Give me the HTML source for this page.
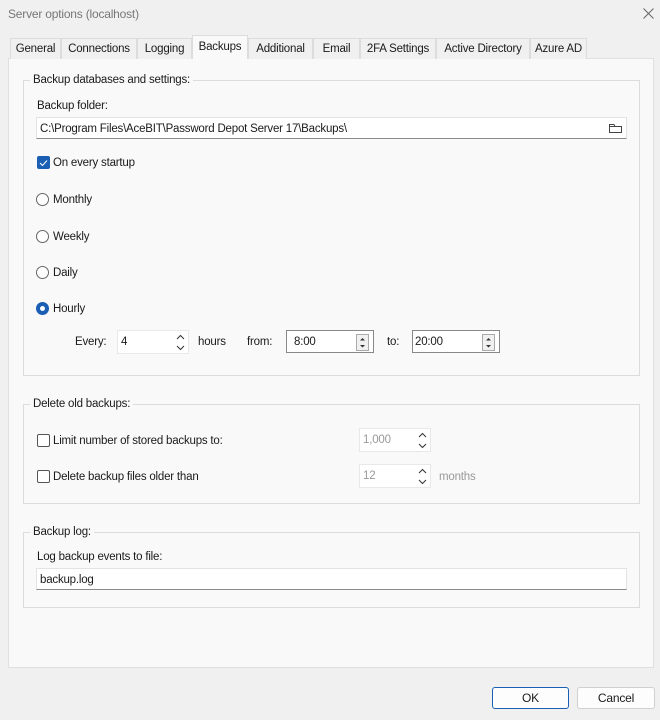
<!DOCTYPE html>
<html><head><meta charset="utf-8"><style>
*{box-sizing:border-box;margin:0;padding:0}
body{width:660px;height:720px;background:#f0f0f0;font-family:"Liberation Sans",sans-serif;font-size:11.5px;color:#1a1a1a;position:relative;overflow:hidden;letter-spacing:-0.2px}
.a{position:absolute;white-space:nowrap}
.t{margin-top:1px}
.tab{position:absolute;top:38px;height:21px;border:1px solid #dcdcdc;border-bottom:none;background:#f0f0f0;text-align:center;line-height:21px}
.page{position:absolute;left:8px;top:58px;width:646px;height:610px;background:#f9f9f9;border:1px solid #e0e0e0}
.grp{position:absolute;left:23px;width:617px;border:1px solid #dcdcdc}
.glab{position:absolute;background:#f9f9f9;padding:0 3px;left:30px}
.inp{position:absolute;background:#fff;border:1px solid #e3e3e3;border-bottom:1px solid #8a8a8a;height:22px;line-height:22px;padding-left:3px}
.cb{position:absolute;width:13px;height:13px;border:1px solid #555;border-radius:2px;background:#fff}
.rb{position:absolute;width:13px;height:13px;border:1px solid #666;border-radius:50%;background:#fff}
.spin{position:absolute;background:#fff;border:1px solid #e8e8e8;height:24px;line-height:23px;padding-left:3px}
.spin2{position:absolute;background:#fff;border:1px solid #888;height:23px;line-height:22px;padding-left:7px}
.arr{position:absolute;right:4px;top:3px;width:13px;height:17px;border:1px solid #aaa;background:#f0f0f0}
.btn{position:absolute;top:687px;height:22px;background:#fdfdfd;border:1px solid #d0d0d0;border-radius:3px;text-align:center;line-height:21px;font-size:12px}
</style></head><body>
<div class="a" style="left:8px;top:7px;color:#777;font-size:12px">Server options (localhost)</div>
<svg class="a" style="left:643px;top:8px" width="11" height="11"><path d="M0.5 0.5L10.5 10.5M10.5 0.5L0.5 10.5" stroke="#666" stroke-width="1"/></svg>
<div class="page"></div>
<div class="tab" style="left:10px;width:51px">General</div>
<div class="tab" style="left:61px;width:76px">Connections</div>
<div class="tab" style="left:137px;width:55px">Logging</div>
<div class="tab" style="left:192px;width:56px;top:35px;height:24px;background:#f9f9f9;line-height:23px;z-index:2">Backups</div>
<div class="tab" style="left:248px;width:65px">Additional</div>
<div class="tab" style="left:313px;width:47px">Email</div>
<div class="tab" style="left:360px;width:76px">2FA Settings</div>
<div class="tab" style="left:436px;width:94px">Active Directory</div>
<div class="tab" style="left:530px;width:57px">Azure AD</div>

<div class="grp" style="top:80px;height:296px"></div>
<div class="glab" style="top:74px">Backup databases and settings:</div>
<div class="a" style="left:37px;top:100px">Backup folder:</div>
<div class="inp" style="left:36px;top:117px;width:591px">C:\Program Files\AceBIT\Password Depot Server 17\Backups\</div>
<svg class="a" style="left:608px;top:122px" width="15" height="12"><path d="M1.5 2.5V10.5H13.5V4.5H7L6 2.5Z M1.5 4.5H7" fill="none" stroke="#444"/></svg>
<div class="cb" style="left:37px;top:156px;background:#1a5fb4;border-color:#1a5fb4"></div>
<svg class="a" style="left:39px;top:159px" width="9" height="8"><path d="M1 4L3.5 6.5L8 1.5" fill="none" stroke="#fff" stroke-width="1"/></svg>
<div class="a" style="left:53px;top:157px">On every startup</div>
<div class="rb" style="left:36px;top:193px"></div><div class="a" style="left:53px;top:194px">Monthly</div>
<div class="rb" style="left:36px;top:230px"></div><div class="a" style="left:53px;top:231px">Weekly</div>
<div class="rb" style="left:36px;top:266px"></div><div class="a" style="left:53px;top:267px">Daily</div>
<div class="rb" style="left:36px;top:302px;border:4px solid #1a5fb4"></div><div class="a" style="left:53px;top:303px">Hourly</div>
<div class="a" style="left:75px;top:336px">Every:</div>
<div class="spin" style="left:117px;top:330px;width:72px">4
<svg class="a" style="right:3px;top:3px" width="9" height="18"><path d="M1 5L4.5 1.5L8 5M1 12L4.5 15.5L8 12" fill="none" stroke="#333"/></svg></div>
<div class="a" style="left:198px;top:336px">hours</div>
<div class="a" style="left:247px;top:336px">from:</div>
<div class="spin2" style="left:286px;top:330px;width:88px">8:00<div class="arr"><svg width="11" height="15"><path d="M3 5.5L5.5 3L8 5.5Z M3 10L5.5 12.5L8 10Z" fill="#333"/></svg></div></div>
<div class="a" style="left:387px;top:336px">to:</div>
<div class="spin2" style="left:412px;top:330px;width:88px;padding-left:2px">20:00<div class="arr"><svg width="11" height="15"><path d="M3 5.5L5.5 3L8 5.5Z M3 10L5.5 12.5L8 10Z" fill="#333"/></svg></div></div>

<div class="grp" style="top:404px;height:100px"></div>
<div class="glab" style="top:398px">Delete old backups:</div>
<div class="cb" style="left:37px;top:434px"></div><div class="a" style="left:53px;top:435px">Limit number of stored backups to:</div>
<div class="spin" style="left:359px;top:428px;width:72px;color:#999">1,000
<svg class="a" style="right:3px;top:3px" width="9" height="18"><path d="M1 5L4.5 1.5L8 5M1 12L4.5 15.5L8 12" fill="none" stroke="#333"/></svg></div>
<div class="cb" style="left:37px;top:470px"></div><div class="a" style="left:53px;top:471px">Delete backup files older than</div>
<div class="spin" style="left:359px;top:464px;width:72px;color:#999">12
<svg class="a" style="right:3px;top:3px" width="9" height="18"><path d="M1 5L4.5 1.5L8 5M1 12L4.5 15.5L8 12" fill="none" stroke="#333"/></svg></div>
<div class="a" style="left:439px;top:471px;color:#999">months</div>

<div class="grp" style="top:532px;height:76px"></div>
<div class="glab" style="top:526px">Backup log:</div>
<div class="a" style="left:37px;top:551px">Log backup events to file:</div>
<div class="inp" style="left:36px;top:568px;width:591px">backup.log</div>

<div class="btn" style="left:492px;width:77px;border:1px solid #1a5fb4">OK</div>
<div class="btn" style="left:577px;width:78px">Cancel</div>
</body></html>
